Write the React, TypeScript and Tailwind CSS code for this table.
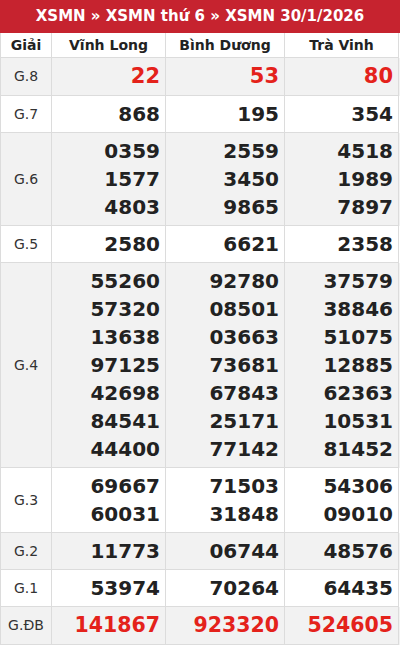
import React from "react";

type Row = { label: string; vals: string[][]; kind?: "g8" | "db" };

const rows: Row[] = [
  { label: "G.8", vals: [["22"], ["53"], ["80"]], kind: "g8" },
  { label: "G.7", vals: [["868"], ["195"], ["354"]] },
  { label: "G.6", vals: [["0359", "1577", "4803"], ["2559", "3450", "9865"], ["4518", "1989", "7897"]] },
  { label: "G.5", vals: [["2580"], ["6621"], ["2358"]] },
  {
    label: "G.4",
    vals: [
      ["55260", "57320", "13638", "97125", "42698", "84541", "44400"],
      ["92780", "08501", "03663", "73681", "67843", "25171", "77142"],
      ["37579", "38846", "51075", "12885", "62363", "10531", "81452"],
    ],
  },
  { label: "G.3", vals: [["69667", "60031"], ["71503", "31848"], ["54306", "09010"]] },
  { label: "G.2", vals: [["11773"], ["06744"], ["48576"]] },
  { label: "G.1", vals: [["53974"], ["70264"], ["64435"]] },
  { label: "G.ĐB", vals: [["141867"], ["923320"], ["524605"]], kind: "db" },
];

const widths = ["w-[52px] border-l", "w-[114px]", "w-[119px]", "w-[114px]"];

export default function App() {
  return (
    <div className="w-[400px] bg-white" style={{ fontFamily: '"DejaVu Sans", sans-serif' }}>
      <div className="h-[33px] bg-[#c6232f] text-white font-bold text-[15px] flex items-center justify-center">
        XSMN » XSMN thứ 6 » XSMN 30/1/2026
      </div>
      <div className="flex h-[25px] text-[14px] font-bold text-[#222]">
        {["Giải", "Vĩnh Long", "Bình Dương", "Trà Vinh"].map((h, i) => (
          <div key={h} className={`${widths[i]} border-r border-b border-[#dcdcdc] flex items-center justify-center`}>
            {h}
          </div>
        ))}
      </div>
      {rows.map((r, ri) => (
        <div key={r.label} className={`flex ${ri % 2 === 0 ? "bg-[#f2f2f2]" : "bg-white"}`}>
          <div className={`${widths[0]} border-r border-b border-[#dcdcdc] flex items-center justify-center text-[14px] text-[#333]`}>
            {r.label}
          </div>
          {r.vals.map((col, ci) => (
            <div
              key={ci}
              className={`${widths[ci + 1]} border-r border-b border-[#dcdcdc] flex flex-col items-end justify-center pr-[5px] py-[4px] font-bold ${
                r.kind === "g8"
                  ? "text-[21px] leading-[29px] text-[#e4221b]"
                  : r.kind === "db"
                  ? "text-[20.5px] leading-[29px] text-[#e4221b]"
                  : "text-[20px] leading-[28px] text-[#222]"
              }`}
            >
              {col.map((v) => (
                <div key={v}>{v}</div>
              ))}
            </div>
          ))}
        </div>
      ))}
    </div>
  );
}
